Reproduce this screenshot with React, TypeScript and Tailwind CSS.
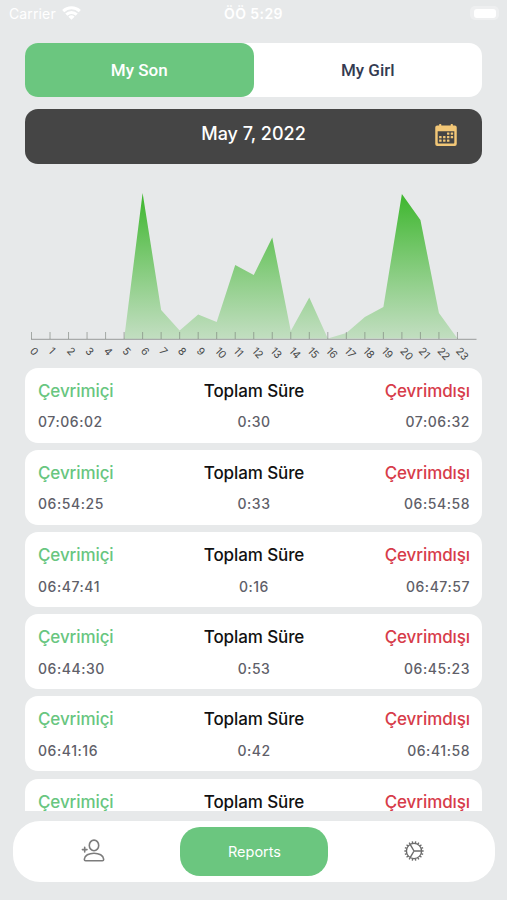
const HOURLY = [0, 0, 0, 0, 0, 0, 146, 29, 8.5, 24.5, 17, 74, 64, 101.5, 8, 41.5, 0.5, 6, 22, 32, 145, 119, 26, 0.5]

interface Session {
  start?: string
  total?: string
  end?: string
}

const SESSIONS: Session[] = [
  { start: '07:06:02', total: '0:30', end: '07:06:32' },
  { start: '06:54:25', total: '0:33', end: '06:54:58' },
  { start: '06:47:41', total: '0:16', end: '06:47:57' },
  { start: '06:44:30', total: '0:53', end: '06:45:23' },
  { start: '06:41:16', total: '0:42', end: '06:41:58' },
  {},
]

const STEP = 18.52
const LEFT = 6.5
const BASE = 154

function StatusBar() {
  return (
    <div className="grid h-[43.4px] shrink-0 grid-cols-3 px-[9px] pt-[4px] text-[14px] leading-[20px] text-white">
      <div className="flex gap-[6px]">
        <span className="tracking-[0.13px]">Carrier</span>
        <svg width="19" height="14" viewBox="0 0 19 14" className="mt-[2px]" fill="none" stroke="white" strokeWidth="3">
          <path d="M1.2 5.2a12 12 0 0 1 16.6 0" />
          <path d="M4.3 8.6a7.4 7.4 0 0 1 10.4 0" />
          <path d="M6.4 10.7a4.5 4.5 0 0 1 6.2 0L9.5 13.8z" fill="white" stroke="none" />
        </svg>
      </div>
      <span className="text-center font-semibold tracking-[0.4px]">ÖÖ 5:29</span>
      <div className="flex justify-end">
        <div className="-mr-[1px] mt-[2px] flex h-[14px] w-[29px] items-center justify-center rounded-[5px] bg-white/30">
          <div className="h-[9px] w-[22px] rounded-[3px] bg-white" />
        </div>
      </div>
    </div>
  )
}

function CalendarIcon() {
  const dots = [
    [12.4, 9.1], [16.2, 9.1],
    [4.4, 12.7], [8.4, 12.7], [12.4, 12.7], [16.2, 12.7],
    [4.4, 16.3], [8.4, 16.3], [12.4, 16.3],
  ]
  return (
    <svg width="22" height="22" viewBox="0 0 22 22.5" fill="#f2c777">
      <path
        fillRule="evenodd"
        d="M2 1.5h2V.6q0-.6.6-.6h1q.6 0 .6.6v.9h9.600V.6q0-.6.6-.6h1q.6 0 .6.6v.9h2q2 0 2 2V20.500q0 2-2 2H2q-2 0-2-2v-17q0-2 2-2zM2.500 7.500V18.800q0 1.200 1.200 1.200h14.600q1.200 0 1.200-1.200V7.500z"
      />
      {dots.map(([x, y]) => (
        <rect key={`${x}-${y}`} x={x - 0.4} y={y - 0.5} width="2.5" height="2.4" rx="0.4" />
      ))}
    </svg>
  )
}

function ActivityChart() {
  const points = HOURLY.map((v, i) => `${LEFT + i * STEP},${BASE - v}`).join(' ')
  return (
    <svg width="457" height="182" viewBox="0 0 457 182" className="block">
      <defs>
        <linearGradient id="activity" gradientUnits="userSpaceOnUse" x1="0" y1="8" x2="0" y2={BASE}>
          <stop offset="0" stopColor="#3cb62c" />
          <stop offset="1" stopColor="#4dbb3f" stopOpacity="0.24" />
        </linearGradient>
      </defs>
      <polygon points={points} fill="url(#activity)" />
      <path d={`M6 ${BASE + 0.3}H451.500`} stroke="#a8aaaa" strokeWidth="1.2" />
      {HOURLY.map((_, i) => {
        const x = LEFT + i * STEP
        return (
          <g key={i}>
            <path d={`M${x} 147V154`} stroke="#777d77" strokeOpacity="0.6" />
            <text
              transform={`translate(${x - 2.3} 166.500) rotate(47)`}
              className="font-['Inter'] text-[10.500px]"
              fill="#454747"
            >
              {i}
            </text>
          </g>
        )
      })}
    </svg>
  )
}

function SessionCard({ start, total, end }: Session) {
  return (
    <div className="grid h-[75px] shrink-0 grid-cols-3 rounded-[13px] bg-white pl-[13px] pr-[12px] pt-[11px] font-medium">
      <div>
        <p className="text-[17px] leading-[24px] tracking-[-0.1px] text-[#68c67f]">Çevrimiçi</p>
        {start && <p className="mt-[9.600px] text-[14px] leading-[20px] tracking-[0.55px] text-[#5f5f69]">{start}</p>}
      </div>
      <div className="text-center">
        <p className="text-[17px] leading-[24px] tracking-[-0.1px] text-[#111]">Toplam Süre</p>
        {total && <p className="mt-[9.600px] text-[14px] leading-[20px] tracking-[0.5px] text-[#5f5f69]">{total}</p>}
      </div>
      <div className="text-right">
        <p className="text-[17px] leading-[24px] tracking-[-0.1px] text-[#d73c4a]">Çevrimdışı</p>
        {end && <p className="mt-[9.600px] text-[14px] leading-[20px] tracking-[0.55px] text-[#5f5f69]">{end}</p>}
      </div>
    </div>
  )
}

function AddUserIcon() {
  return (
    <svg width="24" height="24" viewBox="0 0 24 24" fill="none" stroke="#7c7c7c" strokeWidth="1.6" strokeLinecap="round" strokeLinejoin="round">
      <ellipse cx="13" cy="6.400" rx="4.700" ry="5.300" />
      <path d="M3.300 20.200C3.500 16.500 8 14.200 13 14.200S22.500 16.500 22.700 20.200Q22.700 21.700 21.400 21.700H4.600Q3.300 21.700 3.300 20.200Z" />
      <path d="M3.700 8.300v4.600M1.400 10.600h4.600" />
    </svg>
  )
}

function GearIcon() {
  const teeth = Array.from({ length: 18 }, (_, i) => i * 20)
  return (
    <svg width="20" height="20" viewBox="0 0 20 20" className="mr-[2px]" fill="none" stroke="#6c6c6c" strokeWidth="1.4">
      <circle cx="10" cy="10" r="7.600" />
      {teeth.map((a) => (
        <path key={a} d="M17.800 10H19.700" strokeWidth="1.400" transform={`rotate(${a} 10 10)`} />
      ))}
      <path d="M10 10H17.400M10 10L6.300 3.600M10 10L6.300 16.400" />
    </svg>
  )
}

function BottomNav() {
  return (
    <nav className="ml-[13px] mr-[12px] mt-[9.700px] grid h-[61px] grid-cols-3 items-center justify-items-center rounded-[27px] bg-white">
      <AddUserIcon />
      <div className="flex h-[49px] w-[148px] items-center justify-center rounded-[20px] bg-[#6bc67f] pl-[1px] pt-[1px] text-[14.500px] text-white">
        Reports
      </div>
      <GearIcon />
    </nav>
  )
}

export default function App() {
  return (
    <div className="flex h-[900px] w-[507px] flex-col overflow-hidden bg-[#e7e9ea] font-['Inter',sans-serif]">
      <StatusBar />
      <div className="mx-[25px] grid h-[54px] shrink-0 grid-cols-2 rounded-[13px] bg-white font-['Roboto',sans-serif] text-[17px] font-medium">
        <div className="flex items-center justify-center rounded-[13px] bg-[#6bc67f] text-white">My Son</div>
        <div className="flex items-center justify-center text-[#343b52]">My Girl</div>
      </div>
      <div className="mx-[25px] mt-[12px] grid h-[55px] shrink-0 grid-cols-[1fr_auto_1fr] rounded-[13px] bg-[#454545]">
        <span className="col-start-2 mt-[11.500px] text-[18px] font-medium leading-[26px] text-white">May 7, 2022</span>
        <div className="mr-[25px] mt-[15px] justify-self-end">
          <CalendarIcon />
        </div>
      </div>
      <div className="mx-[25px] mt-[20.700px] h-[182.500px] shrink-0">
        <ActivityChart />
      </div>
      <div className="mx-[25px] flex h-[443.500px] shrink-0 flex-col gap-[7.200px] overflow-hidden">
        {SESSIONS.map((s, i) => (
          <SessionCard key={i} {...s} />
        ))}
      </div>
      <BottomNav />
    </div>
  )
}
